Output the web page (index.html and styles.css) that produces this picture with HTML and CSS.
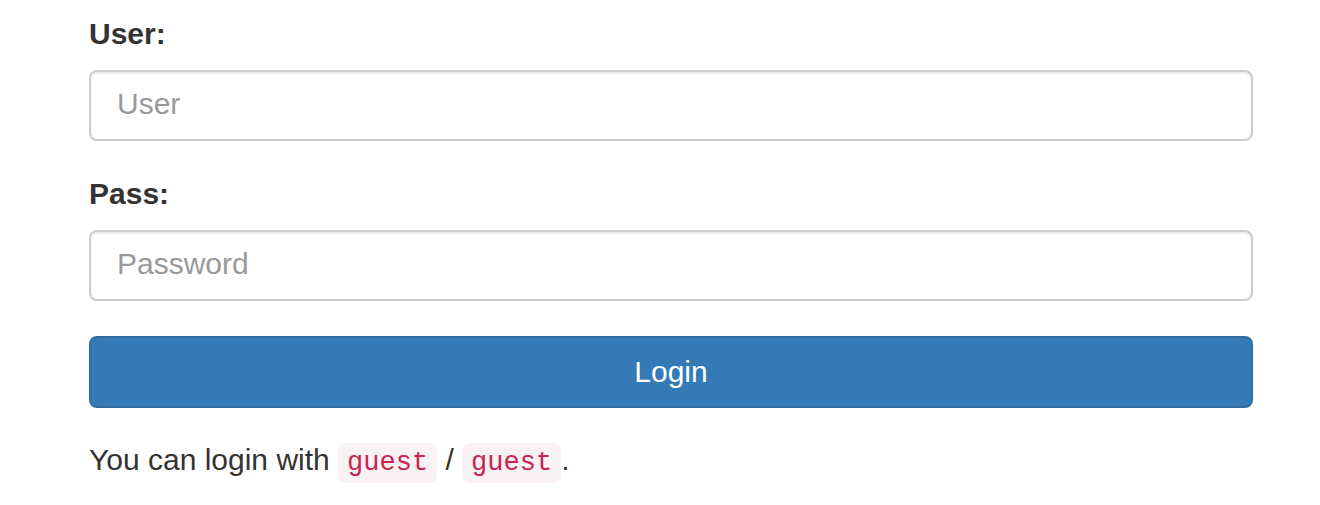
FILE: index.html
```html
<!DOCTYPE html>
<html>
<head>
<meta charset="utf-8">
<link rel="stylesheet" href="styles.css">
</head>
<body>
<form class="login">
  <div class="form-group">
    <label class="label" for="user">User:</label>
    <input class="input" id="user" type="text" placeholder="User">
  </div>
  <div class="form-group">
    <label class="label" for="pass">Pass:</label>
    <input class="input" id="pass" type="password" placeholder="Password">
  </div>
  <button class="btn" type="button">Login</button>
  <p class="hint">You can login with <code class="code">guest</code> / <code class="code">guest</code>.</p>
</form>
</body>
</html>
```
FILE: styles.css
```css
* { box-sizing: border-box; }
html, body { margin: 0; padding: 0; background: #fff; }
body {
  font-family: "Liberation Sans", Arial, sans-serif;
  font-size: 30px;
  line-height: 42px;
  color: #333;
}
.login {
  width: 1164px;
  margin-left: 89px;
  padding-top: 13px;
}
.form-group {
  margin-bottom: 32px;
}
.label {
  display: inline-block;
  font-weight: 700;
  margin-bottom: 15px;
}
.input {
  display: block;
  width: 100%;
  height: 71px;
  padding: 10px 26px 14px;
  font-family: inherit;
  font-size: 30px;
  line-height: 42px;
  color: #555;
  background: #fff;
  border: 2px solid #ccc;
  border-radius: 8px;
  box-shadow: inset 0 2px 2px rgba(0,0,0,0.075);
  outline: none;
}
.input::placeholder { color: #999; }
.btn {
  display: block;
  width: 100%;
  height: 72px;
  margin-top: 35px;
  padding: 0;
  font-family: inherit;
  font-size: 30px;
  line-height: 42px;
  color: #fff;
  background: #337ab7;
  border: 2px solid #2e6da4;
  border-radius: 8px;
}
.hint {
  margin: 31px 0 0;
}
.code {
  font-family: "Liberation Mono", "Courier New", monospace;
  font-size: 27px;
  padding: 5px 9px;
  color: #c7254e;
  background: #f9f2f4;
  border-radius: 8px;
}
```
